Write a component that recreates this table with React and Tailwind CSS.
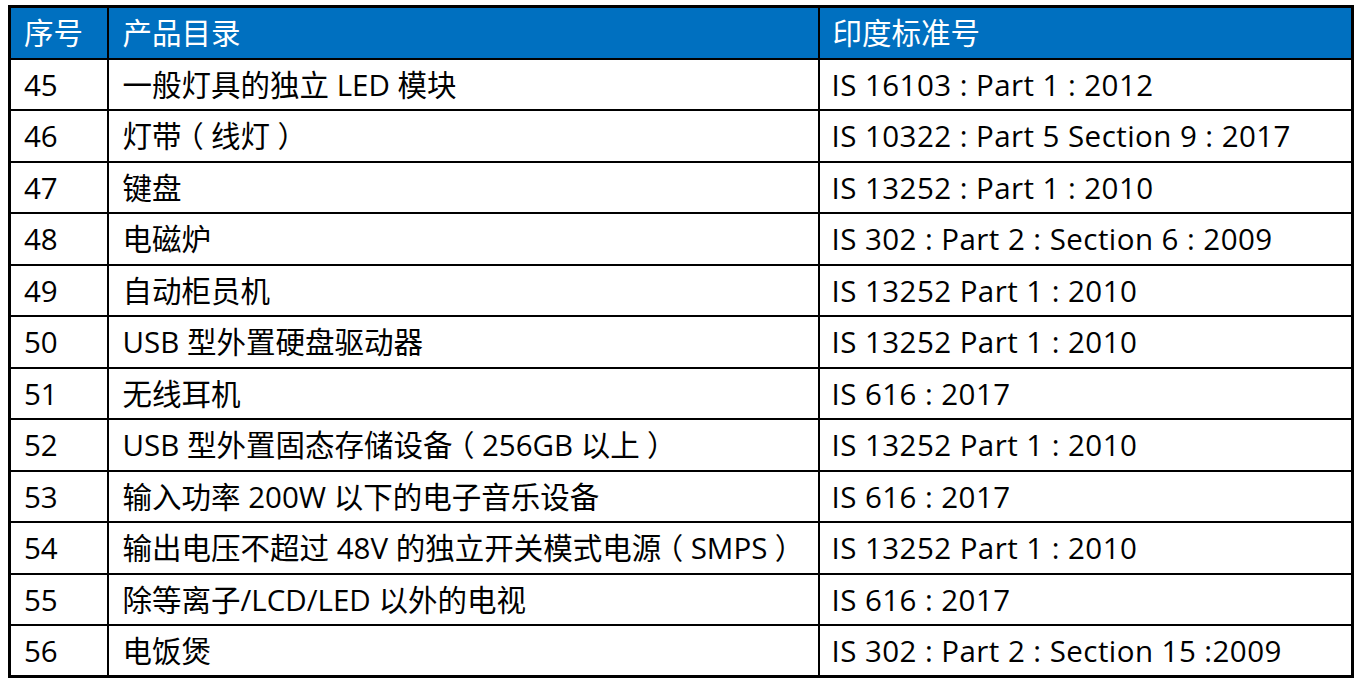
import React from "react";

const rows = [
  ["45", "一般灯具的独立 LED 模块", "IS 16103 : Part 1 : 2012"],
  ["46", "灯带（线灯）", "IS 10322 : Part 5 Section 9 : 2017"],
  ["47", "键盘", "IS 13252 : Part 1 : 2010"],
  ["48", "电磁炉", "IS 302 : Part 2 : Section 6 : 2009"],
  ["49", "自动柜员机", "IS 13252 Part 1 : 2010"],
  ["50", "USB 型外置硬盘驱动器", "IS 13252 Part 1 : 2010"],
  ["51", "无线耳机", "IS 616 : 2017"],
  ["52", "USB 型外置固态存储设备（256GB 以上）", "IS 13252 Part 1 : 2010"],
  ["53", "输入功率 200W 以下的电子音乐设备", "IS 616 : 2017"],
  ["54", "输出电压不超过 48V 的独立开关模式电源（SMPS）", "IS 13252 Part 1 : 2010"],
  ["55", "除等离子/LCD/LED 以外的电视", "IS 616 : 2017"],
  ["56", "电饭煲", "IS 302 : Part 2 : Section 15 :2009"],
];

function Text({ s }) {
  const parts = s.split(/([（）])/);
  return (
    <>
      {parts.map((p, i) => {
        if (p === "（" || p === "）")
          return (
            <span
              key={i}
              className="mx-[0.25em] [font-feature-settings:'halt']"
            >
              {p}
            </span>
          );
        return <React.Fragment key={i}>{p}</React.Fragment>;
      })}
    </>
  );
}

export default function App() {
  return (
    <div
      className="w-[1361px] h-[684px] bg-white pl-[8px] pt-[5px]"
      style={{ fontFamily: '"Open Sans", "Noto Sans CJK SC", sans-serif' }}
    >
      <table className="border-collapse border-[3px] border-black text-[29.5px] leading-none text-black">
        <colgroup>
          <col className="w-[98px]" />
          <col className="w-[711px]" />
          <col className="w-[534px]" />
        </colgroup>
        <thead>
          <tr className="h-[52px] bg-[#0070c0] text-white">
            <th className="border-2 border-black text-left font-normal pl-[13px]">序号</th>
            <th className="border-2 border-black text-left font-normal pl-[14px]">产品目录</th>
            <th className="border-2 border-black text-left font-normal pl-[13px]">印度标准号</th>
          </tr>
        </thead>
        <tbody>
          {rows.map((r) => (
            <tr key={r[0]} className="h-[51.5px]">
              <td className="border-2 border-black pl-[13px]">{r[0]}</td>
              <td className="border-2 border-black pl-[14px]">
                <Text s={r[1]} />
              </td>
              <td className="border-2 border-black pl-[12px] tracking-[0.45px]">{r[2]}</td>
            </tr>
          ))}
        </tbody>
      </table>
    </div>
  );
}
